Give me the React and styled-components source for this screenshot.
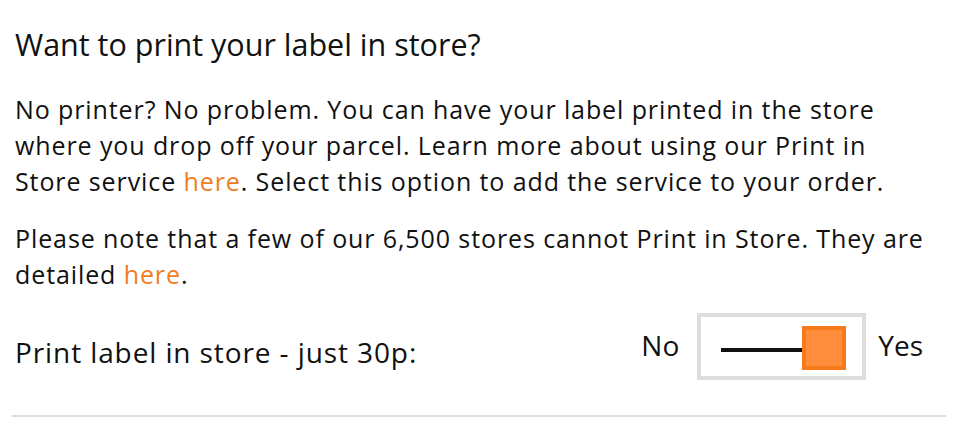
import React from 'react';
import styled, { createGlobalStyle } from 'styled-components';

const GlobalStyle = createGlobalStyle`
	body {
		margin: 0;
		background: #fff;
		font-family: 'Open Sans', Lato, sans-serif;
		color: #111;
	}
`;

const Section = styled.div`
	width: 932px;
	padding: 22px 0 0 14px;
`;

const Title = styled.h2`
	font-size: 30.5px;
	font-weight: 400;
	margin: 0 0 25px 1px;
	line-height: 44px;
`;

const Text = styled.p`
	font-size: 25px;
	line-height: 36px;
	letter-spacing: 0.9px;
	margin: 0 0 21px 1px;
`;

const Link = styled.a`
	color: #f07d22;
	text-decoration: none;
`;

const Row = styled.div`
	display: flex;
	align-items: center;
	justify-content: space-between;
	padding: 0 23px 0 1px;
	margin-top: 8px;
	height: 67px;
`;

const Label = styled.span`
	font-size: 28px;
	letter-spacing: 0.9px;
	margin-top: 10px;
`;

const ToggleGroup = styled.div`
	display: flex;
	align-items: center;
`;

const Option = styled.span`
	font-size: 28px;
	margin: 0 ${(p) => p.gap}px 4px 0;
`;

const Toggle = styled.div`
	height: 59px;
	width: 125px;
	border: 4px solid #dedcdc;
	display: flex;
	align-items: center;
	padding: 0 16px 0 20px;
	margin-right: 12px;
`;

const Track = styled.div`
	flex: 1;
	height: 4px;
	background: #111;
	margin-top: 6px;
`;

const Knob = styled.div`
	width: 36px;
	height: 36px;
	background: #ff8d3b;
	border: 4px solid #f57a1a;
	margin-top: 2px;
`;

const Divider = styled.hr`
	border: none;
	height: 2px;
	background: #dedcdc;
	margin: 35px 0 0 -2px;
`;

export default function App() {
	return (
		<>
			<GlobalStyle />
			<Section>
				<Title>Want to print your label in store?</Title>
				<Text>
					No printer? No problem. You can have your label printed in the store
					where you drop off your parcel. Learn more about using our Print in
					Store&nbsp;service <Link href="#">here</Link>. Select this option to add the
					service to your order.
				</Text>
				<Text>
					Please note that a few of our 6,500 stores cannot Print in Store. They
					are detailed <Link href="#">here</Link>.
				</Text>
				<Row>
					<Label>Print label in store - just 30p:</Label>
					<ToggleGroup>
						<Option gap={18}>No</Option>
						<Toggle>
							<Track />
							<Knob />
						</Toggle>
						<Option gap={0}>Yes</Option>
					</ToggleGroup>
				</Row>
				<Divider />
			</Section>
		</>
	);
}
